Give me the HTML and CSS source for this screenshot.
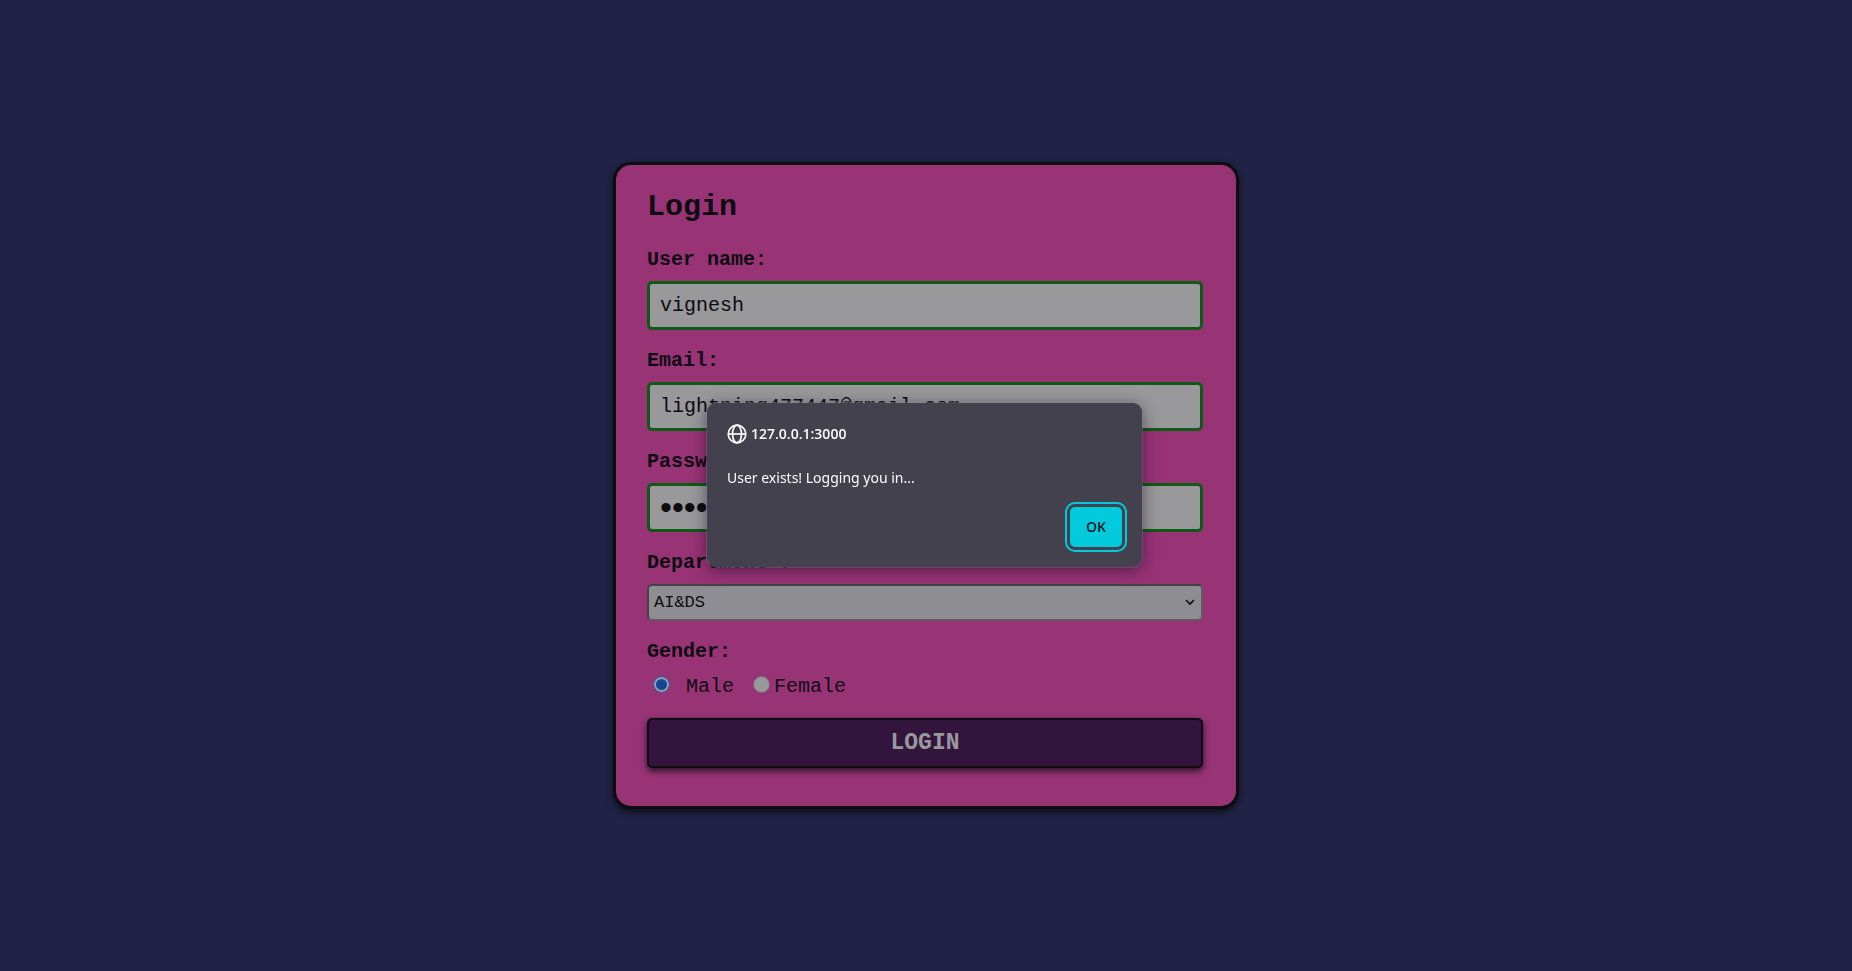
FILE: index.html
```
<!DOCTYPE html>
<html lang="en">
<head>
<meta charset="utf-8">
<title>Login</title>
<link rel="stylesheet" href="styles.css">
</head>
<body>
<main class="card">
  <h1 class="title">Login</h1>
  <form class="form">
    <div class="field">
      <label class="label" for="username">User name:</label>
      <input class="input" id="username" type="text" value="vignesh">
    </div>
    <div class="field">
      <label class="label" for="email">Email:</label>
      <input class="input" id="email" type="email" value="lightning477447@gmail.com">
    </div>
    <div class="field">
      <label class="label" for="password">Password:</label>
      <input class="input input-password" id="password" type="password" value="12345678">
    </div>
    <div class="field">
      <label class="label" for="department">Department :</label>
      <div class="select-wrap">
        <select class="select" id="department"><option>AI&amp;DS</option></select>
        <svg class="chevron" viewBox="0 0 10 7" aria-hidden="true"><path d="M1 1l4 4 4-4" fill="none" stroke="#0d0c10" stroke-width="1.6"/></svg>
      </div>
    </div>
    <fieldset class="gender">
      <legend class="label">Gender:</legend>
      <div class="options">
        <label class="option option-male"><input class="radio" type="radio" name="gender" checked>Male</label>
        <label class="option option-female"><input class="radio" type="radio" name="gender">Female</label>
      </div>
    </fieldset>
    <button class="submit" type="button">LOGIN</button>
  </form>
</main>
<div class="overlay">
  <div class="dialog" role="alertdialog" aria-labelledby="origin" aria-describedby="message">
    <div class="origin">
      <svg class="globe" viewBox="0 0 20 20" fill="none" stroke="#fbfbfe" stroke-width="1.7" aria-hidden="true"><circle cx="10" cy="10" r="8.8"/><ellipse cx="10" cy="10" rx="4.5" ry="8.8"/><path d="M1.2 10h17.6"/></svg>
      <span id="origin">127.0.0.1:3000</span>
    </div>
    <p class="message" id="message">User exists! Logging you in...</p>
    <div class="actions"><button class="ok" type="button">OK</button></div>
  </div>
</div>
</body>
</html>
```
FILE: styles.css
```
* { box-sizing: border-box; }

body {
  margin: 0;
  min-height: 100vh;
  display: flex;
  align-items: center;
  justify-content: center;
  background: #202345;
  color: #0d0c10;
  font-family: "Liberation Mono", monospace;
  font-size: 20px;
  line-height: 24px;
}

.card {
  width: 100%;
  max-width: 626px;
  padding: 24px 33px 38px 31px;
  background: #983376;
  border: 3px solid #0d0c10;
  border-radius: 18px;
  box-shadow: 0 3px 6px rgba(10, 10, 14, 0.8);
}

.title {
  margin: 0 0 23px;
  font-size: 30px;
  line-height: 36px;
}

.form, .field { display: flex; flex-direction: column; }
.form { gap: 19px; }
.field { gap: 9px; }

.label { padding: 0; font-weight: bold; }

.input {
  width: 100%;
  height: 49px;
  padding: 0 10px;
  background: #99999b;
  border: 3px solid #0f5a14;
  border-radius: 5px;
  color: inherit;
  font: inherit;
}

.input-password { font-family: "Liberation Sans", sans-serif; font-size: 34px; }

.select-wrap { display: grid; align-items: center; }

.select {
  grid-area: 1 / 1;
  width: 100%;
  height: 37px;
  padding: 0 5px;
  appearance: none;
  background: #8e8d92;
  border: 2px solid #5d5c66;
  border-top-color: #434249;
  border-left-color: #434249;
  border-radius: 5px;
  color: inherit;
  font: inherit;
  font-size: 17px;
}

.chevron {
  grid-area: 1 / 1;
  justify-self: end;
  width: 10px;
  height: 7px;
  margin-right: 8px;
  pointer-events: none;
}

.gender { margin: 0; padding: 0; border: 0; min-width: 0; }

.options { display: flex; gap: 19px; padding: 11px 0 0 6px; }

.option { display: flex; align-items: flex-start; }
.option-male { gap: 16px; }
.option-female { gap: 4px; }

.radio {
  appearance: none;
  width: 17px;
  height: 17px;
  margin: 1px 0 0;
  background: #99999b;
  border: 1px solid #7c6484;
  border-radius: 50%;
}

.radio:checked {
  background: #10479a;
  border: 1px solid #4a5ca2;
  box-shadow: inset 0 0 0 2px #a09fa8;
}

.submit {
  height: 50px;
  background: #32143c;
  border: 2px solid #0d0c10;
  border-radius: 5px;
  box-shadow: 0 3px 6px rgba(10, 10, 14, 0.8);
  color: #99999b;
  font: bold 23px/28px "Liberation Mono", monospace;
}

.overlay {
  position: fixed;
  inset: 0;
  display: grid;
  place-items: center;
  padding: 0 3px 1px 0;
}

.dialog {
  display: flex;
  flex-direction: column;
  width: 435px;
  padding: 21px 20px 20px;
  background: #42414d;
  border-radius: 9px;
  box-shadow: 0 0 0 1px rgba(140, 140, 150, 0.3), 0 3px 16px rgba(20, 10, 30, 0.55);
  color: #fbfbfe;
  font: 14px/20px "Noto Sans", sans-serif;
}

.origin {
  display: flex;
  align-items: center;
  gap: 4px;
  font-family: "Open Sans", sans-serif;
  font-weight: 600;
}

.globe { width: 20px; height: 20px; }

.message { margin: 24px 0 19px; }

.actions { display: flex; justify-content: flex-end; }

.ok {
  width: 52px;
  height: 40px;
  padding: 0;
  background: #00cadb;
  border: 0;
  border-radius: 5px;
  outline: 2px solid #00cadb;
  outline-offset: 3px;
  color: #15141a;
  font: 600 14px/20px "Open Sans", sans-serif;
}
```
